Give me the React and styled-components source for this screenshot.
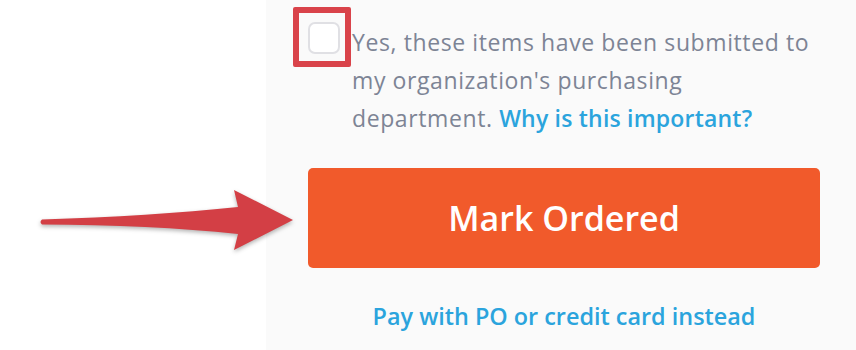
import React from "react";
import styled, { createGlobalStyle } from "styled-components";

const GlobalStyle = createGlobalStyle`
  html, body {
    margin: 0;
    padding: 0;
    background: #ffffff;
  }
  body {
    font-family: "Open Sans", "Liberation Sans", sans-serif;
  }
`;

const Page = styled.div`
  position: relative;
  width: 856px;
  height: 350px;
  display: flex;
  overflow: hidden;
`;

const Gutter = styled.div`
  width: 266px;
  flex-shrink: 0;
  background: #ffffff;
`;

const Panel = styled.div`
  flex: 1;
  background: #fafafa;
  padding: 22px 36px 0 42px;
  display: flex;
  flex-direction: column;
`;

const ConfirmRow = styled.label`
  display: flex;
  align-items: flex-start;
  gap: 12px;
`;

const BoxWrap = styled.span`
  position: relative;
  flex-shrink: 0;
  width: 32px;
  height: 32px;
`;

const Checkbox = styled.span`
  display: block;
  box-sizing: border-box;
  width: 32px;
  height: 32px;
  border: 2px solid #e0e0e4;
  border-radius: 7px;
  background: #ffffff;
`;

const Highlight = styled.span`
  position: absolute;
  left: -15px;
  top: -15px;
  width: 58px;
  height: 60px;
  box-sizing: border-box;
  border: 6px solid #d9434a;
  border-radius: 2px;
`;

const ConfirmText = styled.p`
  margin: 1px 0 0;
  max-width: 464px;
  font-size: 23px;
  line-height: 38px;
  color: #7d8495;
  letter-spacing: 0.6px;
`;

const Link = styled.a`
  color: #2ba4dd;
  font-weight: 600;
  text-decoration: none;
  cursor: pointer;
`;

const InlineLink = styled(Link)`
  letter-spacing: 0.2px;
`;

const PrimaryButton = styled.button`
  margin-top: 31px;
  height: 100px;
  width: 512px;
  border: none;
  border-radius: 5px;
  background: #f15a2b;
  color: #ffffff;
  font-family: "Open Sans", "Liberation Sans", sans-serif;
  font-size: 34px;
  font-weight: 600;
  cursor: pointer;
`;

const AltLink = styled(Link)`
  display: block;
  width: 512px;
  margin-top: 33px;
  text-align: center;
  font-size: 23.4px;
  line-height: 30px;
`;

const Arrow = styled.svg`
  position: absolute;
  left: 0;
  top: 170px;
  filter: drop-shadow(0 2px 2px rgba(0, 0, 0, 0.3));
`;

export default function App() {
  return (
    <>
      <GlobalStyle />
      <Page>
        <Gutter />
        <Panel>
          <ConfirmRow>
            <BoxWrap>
              <Checkbox />
              <Highlight />
            </BoxWrap>
            <ConfirmText>
              Yes, these items have been submitted to my organization's
              purchasing department.{" "}
              <InlineLink>Why is this important?</InlineLink>
            </ConfirmText>
          </ConfirmRow>
          <PrimaryButton>Mark Ordered</PrimaryButton>
          <AltLink>Pay with PO or credit card instead</AltLink>
        </Panel>
        <Arrow width="300" height="100" viewBox="0 170 300 100">
          <path
            d="M42,219.6 Q150,216 238,207 L234,190 L293,220 L234,250 L238,234 Q150,225 42,224.6 Q39,222 42,219.6 Z"
            fill="#d33f45"
          />
        </Arrow>
      </Page>
    </>
  );
}
